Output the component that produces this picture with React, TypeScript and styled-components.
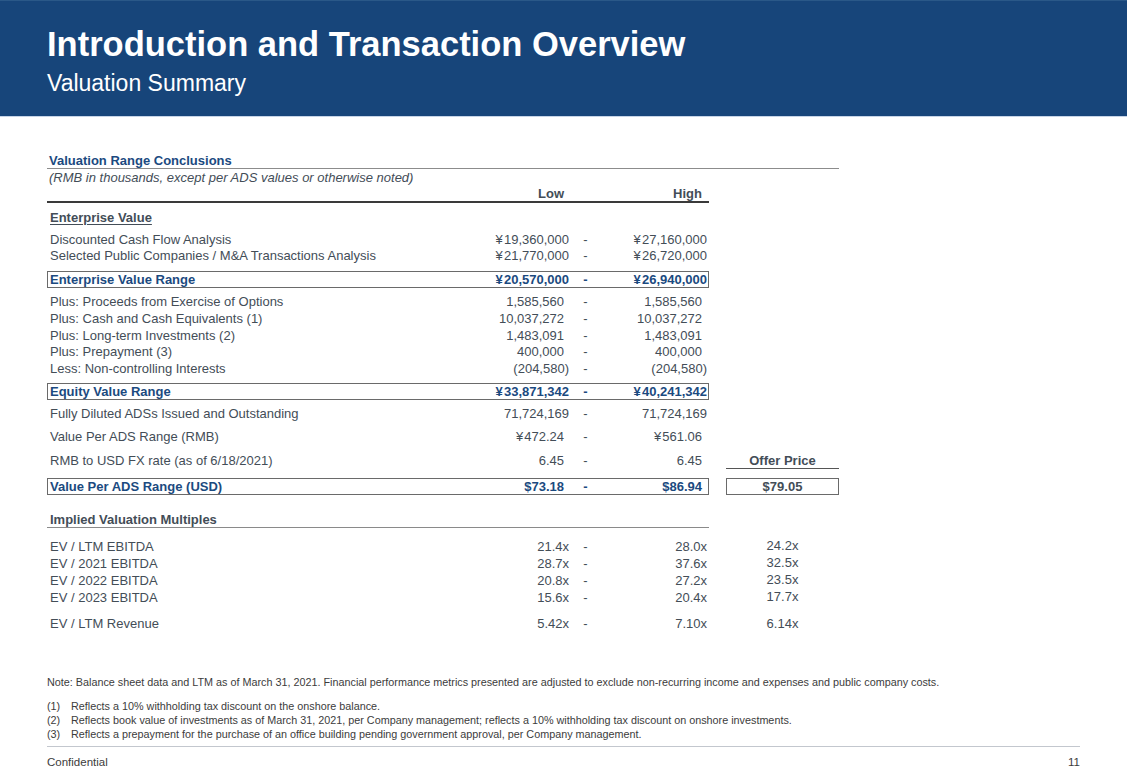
import React from "react";
import styled, { createGlobalStyle } from "styled-components";

const Global = createGlobalStyle`
  html, body { margin: 0; padding: 0; background: #ffffff; }
  body { font-family: "Liberation Sans", Arial, Helvetica, sans-serif; }
`;

const BLUE = "#1b4a80";
const GREY = "#434d57";

const Page = styled.div`
  width: 1127px;
  height: 780px;
  overflow: hidden;
  background: #ffffff;
  display: flex;
  flex-direction: column;
`;

const Header = styled.header`
  height: 117px;
  box-sizing: border-box;
  background: #17457a;
  border-top: 1px solid #2a5888;
  border-bottom: 1px solid #c6d4e7;
  padding: 23px 0 0 47px;
  color: #ffffff;
`;

const Title = styled.h1`
  margin: 0;
  font-size: 34.5px;
  line-height: 40px;
  font-weight: 700;
`;

const Subtitle = styled.h2`
  margin: 5px 0 0;
  font-size: 23px;
  line-height: 28px;
  font-weight: 400;
`;

const Content = styled.main`
  padding: 36px 0 0 47px;
  display: flex;
  flex-direction: column;
`;

const Table = styled.section`
  width: 792px;
  display: flex;
  flex-direction: column;
  font-size: 13px;
  color: ${GREY};
`;

const TableTitle = styled.div`
  font-weight: 700;
  color: ${BLUE};
  line-height: 15px;
  padding-left: 2px;
  border-bottom: 1px solid #8c8c8c;
`;

const Units = styled.div`
  margin-top: 1px;
  font-style: italic;
  line-height: 16px;
  padding-left: 2px;
`;

const Row = styled.div<{ $mt?: number }>`
  display: flex;
  gap: 17px;
  margin-top: ${(p) => p.$mt ?? 0}px;
`;

type Variant = "plain" | "box" | "heavy" | "rule";

const Main = styled.div<{ $variant?: Variant; $lh?: number; $bold?: boolean; $blue?: boolean }>`
  width: 662px;
  box-sizing: border-box;
  display: grid;
  grid-template-columns: 1fr 90px 33px 105px;
  white-space: nowrap;
  font-weight: ${(p) => (p.$bold ? 700 : 400)};
  color: ${(p) => (p.$blue ? BLUE : GREY)};
  line-height: ${(p) => (p.$variant === "box" || p.$variant === "heavy" || p.$variant === "rule" ? 15 : p.$lh ?? 16)}px;
  padding: ${(p) => (p.$variant === "box" ? "0 1px 0 2px" : "0 2px 0 3px")};
  border: ${(p) => (p.$variant === "box" ? "1px solid #6a6a6a" : "none")};
  border-bottom: ${(p) =>
    p.$variant === "box"
      ? "1px solid #6a6a6a"
      : p.$variant === "heavy"
      ? "2px solid #3a3a3a"
      : p.$variant === "rule"
      ? "1px solid #8a8a8a"
      : "none"};
`;

const Label = styled.span<{ $underline?: boolean }>`
  text-align: left;
  text-decoration: ${(p) => (p.$underline ? "underline" : "none")};
  text-underline-offset: 2px;
`;

const Num = styled.span<{ $pad?: boolean }>`
  text-align: right;
  padding-right: ${(p) => (p.$pad ? 5 : 0)}px;
`;

const Dash = styled.span`
  text-align: center;
`;

const Offer = styled.div<{ $variant?: "plain" | "box" | "rule"; $bold?: boolean; $blue?: boolean }>`
  width: 113px;
  box-sizing: border-box;
  text-align: center;
  white-space: nowrap;
  font-weight: ${(p) => (p.$bold ? 700 : 400)};
  color: ${(p) => (p.$blue ? BLUE : GREY)};
  line-height: 15px;
  border: ${(p) => (p.$variant === "box" ? "1px solid #6a6a6a" : "none")};
  border-bottom: ${(p) =>
    p.$variant === "box" ? "1px solid #6a6a6a" : p.$variant === "rule" ? "1px solid #555" : "none"};
`;

const Notes = styled.section`
  margin-top: 43px;
  font-size: 10.8px;
  line-height: 14px;
  color: #3c3c3c;
`;

const NoteLine = styled.p`
  margin: 0 0 10px;
`;

const Footnote = styled.div`
  display: grid;
  grid-template-columns: 24px 1fr;
`;

const Separator = styled.hr`
  margin: 5px 0 0;
  width: 1033px;
  border: none;
  border-top: 1px solid #c3c7ce;
`;

const Footer = styled.footer`
  width: 1033px;
  margin-top: 8px;
  display: flex;
  justify-content: space-between;
  font-size: 11.5px;
  line-height: 14px;
  color: #3c3c3c;
`;

const Y = "\u00a5\u200a";

type R = {
  label: string;
  low: string;
  high: string;
  pad?: boolean;
  offer?: string;
  noDash?: boolean;
};

const Line: React.FC<{
  r: R;
  mt?: number;
  lh?: number;
  variant?: Variant;
  bold?: boolean;
  blue?: boolean;
  offerVariant?: "plain" | "box" | "rule";
  offerBold?: boolean;
  offerBlue?: boolean;
  underline?: boolean;
}> = ({ r, mt, lh, variant = "plain", bold, blue, offerVariant = "plain", offerBold, offerBlue, underline }) => (
  <Row $mt={mt}>
    <Main $variant={variant} $lh={lh} $bold={bold} $blue={blue}>
      <Label $underline={underline}>{r.label}</Label>
      <Num $pad={r.pad}>{r.low}</Num>
      <Dash>{r.low && !r.noDash ? "-" : ""}</Dash>
      <Num $pad={r.pad}>{r.high}</Num>
    </Main>
    <Offer $variant={offerVariant} $bold={offerBold} $blue={offerBlue}>
      {r.offer ?? ""}
    </Offer>
  </Row>
);

const evRows: R[] = [
  { label: "Discounted Cash Flow Analysis", low: Y + "19,360,000", high: Y + "27,160,000" },
  { label: "Selected Public Companies / M&A Transactions Analysis", low: Y + "21,770,000", high: Y + "26,720,000" },
];

const plusRows: R[] = [
  { label: "Plus: Proceeds from Exercise of Options", low: "1,585,560", high: "1,585,560", pad: true },
  { label: "Plus: Cash and Cash Equivalents (1)", low: "10,037,272", high: "10,037,272", pad: true },
  { label: "Plus: Long-term Investments (2)", low: "1,483,091", high: "1,483,091", pad: true },
  { label: "Plus: Prepayment (3)", low: "400,000", high: "400,000", pad: true },
  { label: "Less: Non-controlling Interests", low: "(204,580)", high: "(204,580)" },
];

const multRows: R[] = [
  { label: "EV / LTM EBITDA", low: "21.4x", high: "28.0x", offer: "24.2x" },
  { label: "EV / 2021 EBITDA", low: "28.7x", high: "37.6x", offer: "32.5x" },
  { label: "EV / 2022 EBITDA", low: "20.8x", high: "27.2x", offer: "23.5x" },
  { label: "EV / 2023 EBITDA", low: "15.6x", high: "20.4x", offer: "17.7x" },
];

export default function App() {
  return (
    <Page>
      <Global />
      <Header>
        <Title>Introduction and Transaction Overview</Title>
        <Subtitle>Valuation Summary</Subtitle>
      </Header>
      <Content>
        <Table>
          <TableTitle>Valuation Range Conclusions</TableTitle>
          <Units>(RMB in thousands, except per ADS values or otherwise noted)</Units>
          <Line r={{ label: "", low: "Low", high: "High", pad: true, noDash: true }} variant="heavy" bold />
          <Line r={{ label: "Enterprise Value", low: "", high: "" }} mt={7} bold underline />
          {evRows.map((r, i) => (
            <Line key={r.label} r={r} mt={i === 0 ? 6 : 0} />
          ))}
          <Line
            r={{ label: "Enterprise Value Range", low: Y + "20,570,000", high: Y + "26,940,000" }}
            mt={7}
            variant="box"
            bold
            blue
          />
          {plusRows.map((r, i) => (
            <Line key={r.label} r={r} mt={i === 0 ? 6 : 0} lh={16.75} />
          ))}
          <Line
            r={{ label: "Equity Value Range", low: Y + "33,871,342", high: Y + "40,241,342" }}
            mt={5.25}
            variant="box"
            bold
            blue
          />
          <Line r={{ label: "Fully Diluted ADSs Issued and Outstanding", low: "71,724,169", high: "71,724,169" }} mt={6} />
          <Line r={{ label: "Value Per ADS Range (RMB)", low: Y + "472.24", high: Y + "561.06", pad: true }} mt={7} />
          <Line
            r={{ label: "RMB to USD FX rate (as of 6/18/2021)", low: "6.45", high: "6.45", pad: true, offer: "Offer Price" }}
            mt={8}
            offerVariant="rule"
            offerBold
          />
          <Line
            r={{ label: "Value Per ADS Range (USD)", low: "$73.18", high: "$86.94", pad: true, offer: "$79.05" }}
            mt={9}
            variant="box"
            bold
            blue
            offerVariant="box"
            offerBold
          />
          <Line r={{ label: "Implied Valuation Multiples", low: "", high: "" }} mt={17} variant="rule" bold />
          {multRows.map((r, i) => (
            <Line key={r.label} r={r} mt={i === 0 ? 10 : 0} lh={17} />
          ))}
          <Line r={{ label: "EV / LTM Revenue", low: "5.42x", high: "7.10x", offer: "6.14x" }} mt={10} />
        </Table>

        <Notes>
          <NoteLine>
            Note: Balance sheet data and LTM as of March 31, 2021. Financial performance metrics presented are adjusted to
            exclude non-recurring income and expenses and public company costs.
          </NoteLine>
          <Footnote>
            <span>(1)</span>
            <span>Reflects a 10% withholding tax discount on the onshore balance.</span>
          </Footnote>
          <Footnote>
            <span>(2)</span>
            <span>
              Reflects book value of investments as of March 31, 2021, per Company management; reflects a 10% withholding
              tax discount on onshore investments.
            </span>
          </Footnote>
          <Footnote>
            <span>(3)</span>
            <span>
              Reflects a prepayment for the purchase of an office building pending government approval, per Company
              management.
            </span>
          </Footnote>
        </Notes>
        <Separator />
        <Footer>
          <span>Confidential</span>
          <span>11</span>
        </Footer>
      </Content>
    </Page>
  );
}
